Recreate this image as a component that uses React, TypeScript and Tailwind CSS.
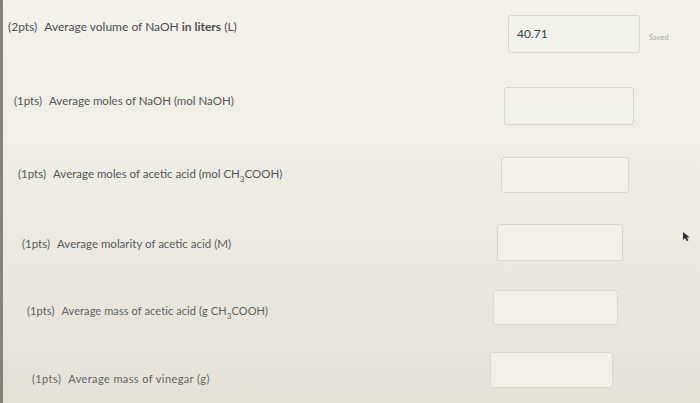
import React from 'react';

type Row = {
  pts: string;
  label: React.ReactNode;
  value?: string;
  rowH: string;
  labelCls: string;
  inputCls: string;
  gutter: string;
  saved?: boolean;
};

const CH3COOH = (
  <>
    CH<sub className="text-[8px] align-[-2px]">3</sub>COOH
  </>
);

const rows: Row[] = [
  {
    pts: '(2pts)',
    label: (
      <>
        Average volume of NaOH <span className="font-bold">in liters</span> (L)
      </>
    ),
    value: '40.71',
    rowH: 'h-[70px]',
    labelCls: 'pl-[5px] pt-[19px] text-[12px] text-[#4f4f4f]',
    inputCls: 'mt-[15px] w-[132px] h-[38px]',
    gutter: 'w-[60px]',
    saved: true,
  },
  {
    pts: '(1pts)',
    label: <>Average moles of NaOH (mol NaOH)</>,
    rowH: 'h-[70px]',
    labelCls: 'pl-[11px] pt-[23px] text-[11.5px] text-[#555]',
    inputCls: 'mt-[17px] w-[130px] h-[38px]',
    gutter: 'w-[66px]',
  },
  {
    pts: '(1pts)',
    label: <>Average moles of acetic acid (mol {CH3COOH})</>,
    rowH: 'h-[70px]',
    labelCls: 'pl-[15px] pt-[26px] text-[11.5px] text-[#575757]',
    inputCls: 'mt-[17px] w-[128px] h-[36px]',
    gutter: 'w-[71px]',
  },
  {
    pts: '(1pts)',
    label: <>Average molarity of acetic acid (M)</>,
    rowH: 'h-[70px]',
    labelCls: 'pl-[19px] pt-[26px] text-[11.5px] text-[#5c5c5c]',
    inputCls: 'mt-[14px] w-[126px] h-[37px]',
    gutter: 'w-[77px]',
  },
  {
    pts: '(1pts)',
    label: <>Average mass of acetic acid (g {CH3COOH})</>,
    rowH: 'h-[65px]',
    labelCls: 'pl-[24px] pt-[23px] text-[11px] tracking-[0.1px] text-[#626262]',
    inputCls: 'mt-[10px] w-[125px] h-[35px]',
    gutter: 'w-[82px]',
  },
  {
    pts: '(1pts)',
    label: <>Average mass of vinegar (g)</>,
    rowH: 'h-[58px]',
    labelCls: 'pl-[29px] pt-[26px] text-[11px] tracking-[0.4px] text-[#666]',
    inputCls: 'mt-[7px] w-[123px] h-[36px]',
    gutter: 'w-[87px]',
  },
];

export default function App() {
  return (
    <div
      className="relative w-[700px] h-[403px] overflow-hidden border-l-[3px] border-[#85827a] bg-gradient-to-b from-[#f3f2ec] via-[#ecebe4] to-[#e3e1d8]"
      style={{ fontFamily: 'Lato, "Open Sans", sans-serif' }}
    >
      <div className="flex flex-col">
        {rows.map((r, i) => (
          <div key={i} className={`flex ${r.rowH}`}>
            <div className={`flex-1 leading-4 whitespace-nowrap ${r.labelCls}`}>
              <span className="mr-[7px]">{r.pts}</span>
              {r.label}
            </div>
            <div
              className={`shrink-0 rounded-[3px] border border-[#dad9d0] bg-[#f4f3ee]/70 flex items-center px-[8px] text-[12px] text-[#3f3f3f] ${r.inputCls}`}
            >
              {r.value}
            </div>
            <div className={`shrink-0 ${r.gutter}`}>
              {r.saved && (
                <div className="pl-[9px] pt-[32px] text-[7.5px] text-[#a8a89f]">Saved</div>
              )}
            </div>
          </div>
        ))}
      </div>
      <svg
        className="absolute left-[679px] top-[231px]"
        width="9"
        height="11"
        viewBox="0 0 9 11"
      >
        <path d="M1 1 L1 9 L3 7 L5 10 L6.5 9.3 L4.8 6.5 L7.5 6.3 Z" fill="#2d2d2d" />
      </svg>
    </div>
  );
}
